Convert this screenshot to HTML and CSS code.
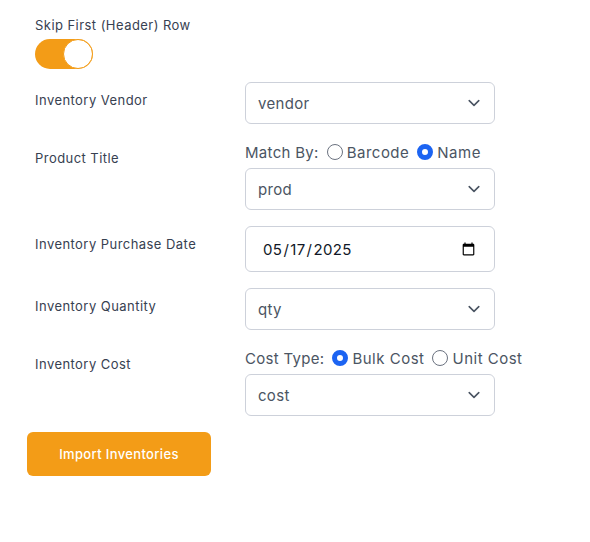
FILE: index.html
```html
<!DOCTYPE html>
<html lang="en">
<head>
  <meta charset="UTF-8">
  <title>Import Inventories</title>
  <link rel="stylesheet" href="styles.css">
</head>
<body>
  <form class="import-form">
    <div class="skip-row">
      <label class="skip-label" for="skipHeader">Skip First (Header) Row</label>
      <label class="toggle">
        <input type="checkbox" id="skipHeader" checked>
        <span class="toggle-knob"></span>
      </label>
    </div>

    <div class="row">
      <label class="row-label" for="vendor">Inventory Vendor</label>
      <div class="row-field">
        <select id="vendor"><option>vendor</option></select>
      </div>
    </div>

    <div class="row">
      <label class="row-label" for="prod">Product Title</label>
      <div class="row-field">
        <div class="radio-line">
          <span>Match By:</span>
          <label class="radio"><input type="radio" name="match"> Barcode</label>
          <label class="radio"><input type="radio" name="match" checked> Name</label>
        </div>
        <select id="prod"><option>prod</option></select>
      </div>
    </div>

    <div class="row">
      <label class="row-label" for="purchaseDate">Inventory Purchase Date</label>
      <div class="row-field">
        <input type="date" id="purchaseDate" value="2025-05-17">
      </div>
    </div>

    <div class="row">
      <label class="row-label" for="qty">Inventory Quantity</label>
      <div class="row-field">
        <select id="qty"><option>qty</option></select>
      </div>
    </div>

    <div class="row">
      <label class="row-label" for="cost">Inventory Cost</label>
      <div class="row-field">
        <div class="radio-line">
          <span>Cost Type:</span>
          <label class="radio"><input type="radio" name="costType" checked> Bulk Cost</label>
          <label class="radio"><input type="radio" name="costType"> Unit Cost</label>
        </div>
        <select id="cost"><option>cost</option></select>
      </div>
    </div>

    <button type="button" class="import-btn">Import Inventories</button>
  </form>
</body>
</html>
```

FILE: styles.css
```css
body {
  margin: 0;
  background: #fff;
  font-family: Inter, "Liberation Sans", sans-serif;
  color: #4b5563;
}
.import-form {
  padding: 15px 27px 0;
}
.skip-row {
  padding-left: 8px;
  margin-bottom: 13px;
}
.skip-label {
  display: block;
  font-size: 13px;
  line-height: 20px;
  letter-spacing: 0.45px;
  color: #374151;
  margin-bottom: 4px;
}
.toggle {
  display: block;
  position: relative;
  width: 58px;
  height: 30px;
  border-radius: 15px;
  background: #f39c17;
}
.toggle input {
  display: none;
}
.toggle-knob {
  position: absolute;
  top: 0;
  right: 0;
  width: 28px;
  height: 28px;
  border: 1px solid #f39c17;
  border-radius: 50%;
  background: #fff;
}
.row {
  display: flex;
  padding-left: 8px;
  margin-bottom: 16px;
}
.row-label {
  width: 210px;
  flex: none;
  padding-top: 8px;
  font-size: 13px;
  line-height: 20px;
  letter-spacing: 0.45px;
  color: #374151;
}
.row-field {
  width: 250px;
}
.radio-line {
  display: flex;
  align-items: center;
  gap: 8px;
  height: 24px;
  margin-bottom: 4px;
  font-size: 15px;
  white-space: nowrap;
  letter-spacing: 0.3px;
}
.radio {
  display: flex;
  align-items: center;
  gap: 4px;
  letter-spacing: 0.5px;
}
.radio input {
  appearance: none;
  width: 16px;
  height: 16px;
  margin: 0;
  border: 1px solid #6b7280;
  border-radius: 50%;
  background: #fff;
}
.radio input:checked {
  border: 5px solid #1c64f2;
}
select, input[type="date"] {
  display: block;
  width: 100%;
  box-sizing: border-box;
  border: 1px solid #cdd1da;
  border-radius: 6px;
  background-color: #fff;
  font-family: inherit;
  font-size: 15px;
  letter-spacing: 0.3px;
}
select {
  appearance: none;
  height: 42px;
  padding: 0 12px;
  color: #4b5563;
  background-image: url("data:image/svg+xml,%3Csvg xmlns='http://www.w3.org/2000/svg' viewBox='0 0 20 20' fill='none'%3E%3Cpath d='M6 8l4 4 4-4' stroke='%234b5563' stroke-width='1.3' stroke-linecap='round' stroke-linejoin='round'/%3E%3C/svg%3E");
  background-repeat: no-repeat;
  background-position: right 8px center;
  background-size: 24px 24px;
}
input[type="date"] {
  height: 46px;
  padding: 0 16px;
  color: #111827;
  letter-spacing: 0.4px;
}
.import-btn {
  display: block;
  width: 184px;
  height: 44px;
  border: none;
  border-radius: 6px;
  background: #f39c17;
  color: #fff;
  font-family: inherit;
  font-size: 13px;
  font-weight: 500;
  letter-spacing: 0.36px;
}
```
